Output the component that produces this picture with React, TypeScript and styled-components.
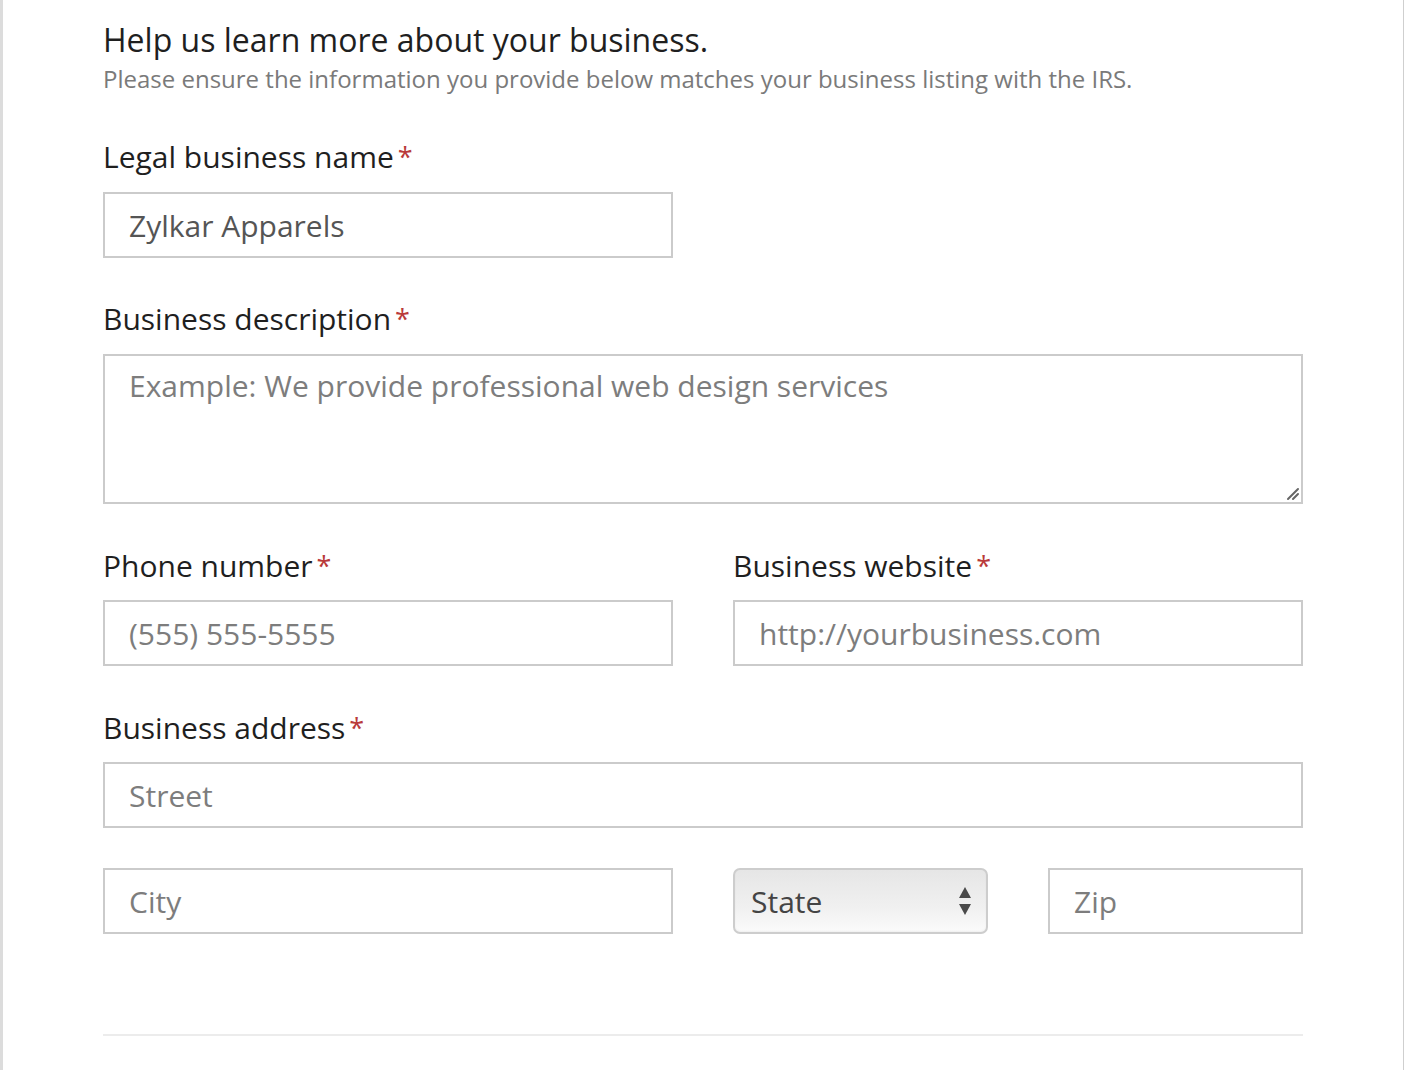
import styled, { createGlobalStyle } from 'styled-components';

const GlobalStyle = createGlobalStyle`
    html, body {
        margin: 0;
        padding: 0;
        background: #ffffff;
    }
    body {
        font-family: 'Open Sans', 'DejaVu Sans', sans-serif;
        color: #222;
    }
`;

const Page = styled.div`
    box-sizing: border-box;
    width: 1404px;
    min-height: 1070px;
    border-left: 3px solid #dcdcdc;
    border-right: 1px solid #cfcfcf;
    padding: 20px 0 0 100px;
`;

const Form = styled.form`
    width: 1200px;
    display: flex;
    flex-direction: column;
`;

const Heading = styled.h2`
    margin: 0;
    font-size: 32px;
    line-height: 40px;
    font-weight: 400;
    color: #1f1f1f;
`;

const Subtitle = styled.p`
    margin: 3px 0 0;
    font-size: 24px;
    line-height: 32px;
    color: #7a7a7a;
`;

const Field = styled.div<{ $top: number }>`
    display: flex;
    flex-direction: column;
    margin-top: ${p => p.$top}px;
`;

const Label = styled.label<{ $gap?: number }>`
    font-size: 30px;
    line-height: 36px;
    color: #1f1f1f;
    margin-bottom: ${p => p.$gap ?? 17}px;

    span {
        color: #b93a3a;
        font-size: 27px;
        margin-left: 4px;
        vertical-align: 1px;
    }
`;

const inputBase = `
    box-sizing: border-box;
    height: 66px;
    border: 2px solid #cbcbcb;
    border-radius: 0;
    padding: 0 24px;
    font-family: 'Open Sans', 'DejaVu Sans', sans-serif;
    font-size: 30px;
    color: #555;
    background: #fff;
    outline: none;
    &::placeholder {
        color: #7d7d7d;
    }
`;

const Input = styled.input<{ $w?: number }>`
    ${inputBase}
    width: ${p => (p.$w ? `${p.$w}px` : '100%')};
`;

const AreaWrap = styled.div`
    position: relative;
    height: 150px;
`;

const TextArea = styled.textarea`
    ${inputBase}
    display: block;
    width: 100%;
    height: 150px;
    padding: 10px 24px;
    resize: none;
    line-height: 40px;
`;

const Grip = styled.svg`
    position: absolute;
    right: 3px;
    bottom: 3px;
    pointer-events: none;
`;

const Row = styled.div<{ $top?: number }>`
    display: grid;
    grid-template-columns: 570px 570px;
    column-gap: 60px;
    margin-top: ${p => p.$top ?? 0}px;
`;

const AddressRow = styled.div`
    display: grid;
    grid-template-columns: 570px 255px 255px;
    column-gap: 60px;
    margin-top: 40px;
`;

const SelectBox = styled.div`
    position: relative;
    box-sizing: border-box;
    height: 66px;
    border: 2px solid #cdcdcd;
    border-radius: 7px;
    background: linear-gradient(#e6e6e6, #f0f0f0 60%, #fbfbfb);
    box-shadow: inset 0 -1px 2px rgba(0, 0, 0, 0.05);
    display: flex;
    align-items: center;
    padding: 0 16px;
    font-size: 30px;
    color: #444;
`;

const Arrows = styled.svg`
    position: absolute;
    right: 14px;
    top: 50%;
    transform: translateY(-50%);
`;

const Rule = styled.hr`
    margin: 100px 0 0;
    border: 0;
    height: 2px;
    background: #ececec;
`;

export default function App() {
    return (
        <Page>
            <GlobalStyle />
            <Form>
                <Heading>Help us learn more about your business.</Heading>
                <Subtitle>Please ensure the information you provide below matches your business listing with the IRS.</Subtitle>

                <Field $top={44}>
                    <Label>Legal business name<span>*</span></Label>
                    <Input $w={570} defaultValue="Zylkar Apparels" />
                </Field>

                <Field $top={43}>
                    <Label>Business description<span>*</span></Label>
                    <AreaWrap>
                        <TextArea placeholder="Example: We provide professional web design services" />
                        <Grip width="14" height="14" viewBox="0 0 14 14">
                            <path d="M2 12 L12 2 M7 12 L12 7" stroke="#666" strokeWidth="2" strokeLinecap="round" />
                        </Grip>
                    </AreaWrap>
                </Field>

                <Row $top={44}>
                    <Field $top={0}>
                        <Label $gap={16}>Phone number<span>*</span></Label>
                        <Input placeholder="(555) 555-5555" />
                    </Field>
                    <Field $top={0}>
                        <Label $gap={16}>Business website<span>*</span></Label>
                        <Input placeholder="http://yourbusiness.com" />
                    </Field>
                </Row>

                <Field $top={44}>
                    <Label $gap={16}>Business address<span>*</span></Label>
                    <Input placeholder="Street" />
                </Field>

                <AddressRow>
                    <Input placeholder="City" />
                    <SelectBox>
                        State
                        <Arrows width="14" height="30" viewBox="0 0 14 30">
                            <path d="M7 1 L13 12 L1 12 Z" fill="#4a4a4a" />
                            <path d="M1 18 L13 18 L7 29 Z" fill="#4a4a4a" />
                        </Arrows>
                    </SelectBox>
                    <Input placeholder="Zip" />
                </AddressRow>

                <Rule />
            </Form>
        </Page>
    );
}
